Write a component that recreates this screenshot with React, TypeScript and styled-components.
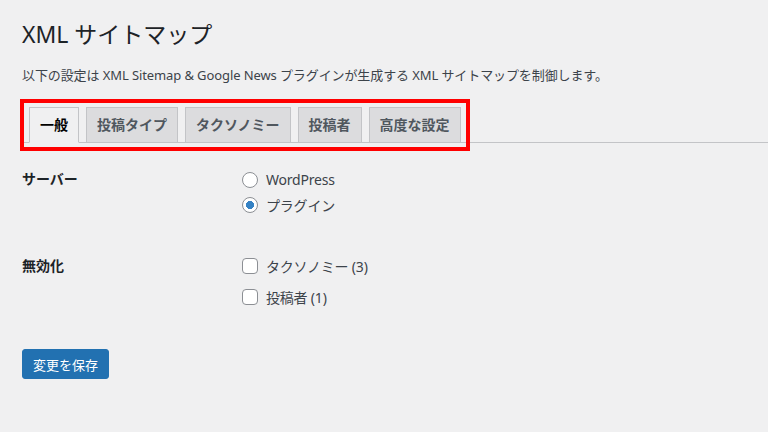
import styled, { createGlobalStyle } from "styled-components";

const GlobalStyle = createGlobalStyle`
html, body {
  margin: 0;
  padding: 0;
  background: #f0f0f1;
}
body {
  font-family: "Noto Sans", "Noto Sans CJK JP", sans-serif;
  color: #3c434a;
}
`;

const tabs = ["一般", "投稿タイプ", "タクソノミー", "投稿者", "高度な設定"];

function App() {
  return (
    <>
      <GlobalStyle />
      <Wrap>
        <Title>XML サイトマップ</Title>
        <Description>
          以下の設定は XML Sitemap &amp; Google News プラグインが生成する XML サイトマップを制御します。
        </Description>

        <TabArea>
          <TabWrapper>
            {tabs.map((t, i) => (
              <Tab key={t} $active={i === 0}>
                {t}
              </Tab>
            ))}
          </TabWrapper>
          {/* 赤枠の注釈 */}
          <Highlight />
        </TabArea>

        <Row $top={20}>
          <Label $pad={6}>サーバー</Label>
          <Options $pad={4}>
            <Option $h={25}>
              <Radio type="radio" name="server" />
              WordPress
            </Option>
            <Option $h={25}>
              <Radio type="radio" name="server" defaultChecked />
              プラグイン
            </Option>
          </Options>
        </Row>

        <Row $top={33}>
          <Label $pad={6}>無効化</Label>
          <Options $pad={0}>
            <Option $h={31}>
              <Check type="checkbox" />
              タクソノミー (3)
            </Option>
            <Option $h={31}>
              <Check type="checkbox" />
              投稿者 (1)
            </Option>
          </Options>
        </Row>

        <SaveButton type="button">変更を保存</SaveButton>
      </Wrap>
    </>
  );
}

const Wrap = styled.div`
padding: 19px 0 0 22px;
`;

const Title = styled.h1`
margin: 0;
font-size: 23px;
font-weight: 400;
line-height: 30px;
color: #1d2327;
`;

const Description = styled.p`
margin: 16px 0 0;
font-size: 13px;
line-height: 20px;
letter-spacing: -0.1px;
color: #3c434a;
`;

/* タブ */
const TabArea = styled.div`
position: relative;
margin-top: 22px;
`;

const TabWrapper = styled.div`
display: flex;
align-items: flex-end;
border-bottom: 1px solid #c3c4c7;
`;

const Tab = styled.a<{ $active?: boolean }>`
margin-left: 7px;
padding: 5px 10px;
font-size: 14px;
line-height: 24px;
font-weight: 600;
border: 1px solid #c3c4c7;
border-bottom: ${(p) => (p.$active ? "1px solid #f0f0f1" : "none")};
margin-bottom: ${(p) => (p.$active ? "-1px" : "0")};
background: ${(p) => (p.$active ? "#f0f0f1" : "#dcdcde")};
color: ${(p) => (p.$active ? "#000" : "#50575e")};
white-space: nowrap;
cursor: pointer;
`;

const Highlight = styled.div`
position: absolute;
left: -2px;
top: -8px;
width: 450px;
height: 52px;
box-sizing: border-box;
border: 4px solid #ff0000;
pointer-events: none;
`;

/* 設定行 */
const Row = styled.div<{ $top: number }>`
display: grid;
grid-template-columns: 220px 1fr;
margin-top: ${(p) => p.$top}px;
`;

const Label = styled.div<{ $pad: number }>`
padding-top: ${(p) => p.$pad}px;
font-size: 14px;
line-height: 20px;
font-weight: 600;
color: #1d2327;
`;

const Options = styled.div<{ $pad: number }>`
display: flex;
flex-direction: column;
padding-top: ${(p) => p.$pad}px;
`;

const Option = styled.label<{ $h: number }>`
display: flex;
align-items: center;
gap: 8px;
height: ${(p) => p.$h}px;
font-size: 14px;
letter-spacing: -0.2px;
color: #3c434a;
`;

const Radio = styled.input`
appearance: none;
margin: 0;
width: 16px;
height: 16px;
border: 1px solid #8c8f94;
border-radius: 50%;
background: #fff;
flex: none;

&:checked {
  background: radial-gradient(circle, #3582c4 0 3.8px, #fff 4.3px);
}
`;

const Check = styled.input`
appearance: none;
margin: 0;
width: 16px;
height: 16px;
border: 1px solid #8c8f94;
border-radius: 4px;
background: #fff;
flex: none;
`;

const SaveButton = styled.button`
display: block;
margin-top: 37px;
height: 30px;
padding: 0 10px;
font-family: "Noto Sans CJK JP", sans-serif;
font-size: 13px;
color: #fff;
background: #2271b1;
border: 1px solid #2271b1;
border-radius: 3px;
cursor: pointer;
`;

export default App;
